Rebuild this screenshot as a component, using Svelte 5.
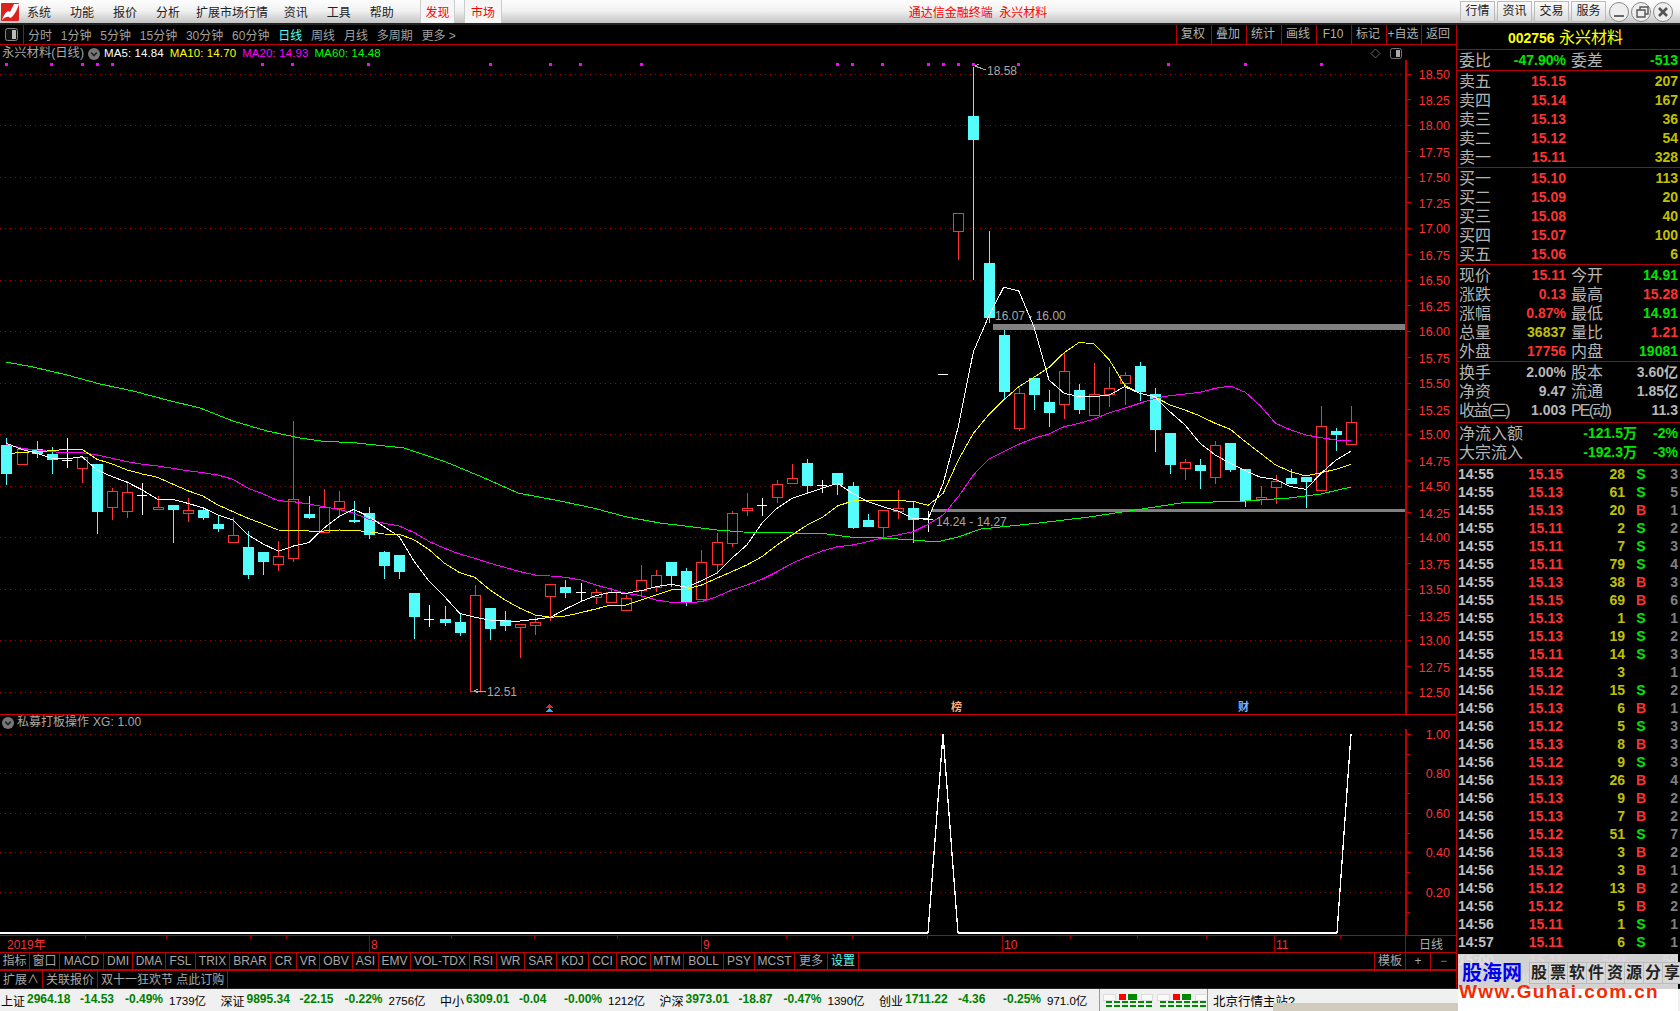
<script>
  const menu = ['系统', '功能', '报价', '分析', '扩展市场行情', '资讯', '工具', '帮助'];
  const periods = ['分时', '1分钟', '5分钟', '15分钟', '30分钟', '60分钟', '日线', '周线', '月线', '多周期', '更多 >'];
  const tools = ['复权', '叠加', '统计', '画线', 'F10', '标记', '+自选', '返回'];

  // [width, label]
  const tabs = [[30,'指标'],[30,'窗口'],[44,'MACD'],[29,'DMI'],[33,'DMA'],[30,'FSL'],[34,'TRIX'],[41,'BRAR'],[26,'CR'],[23,'VR'],[33,'OBV'],[26,'ASI'],[32,'EMV'],[59,'VOL-TDX'],[27,'RSI'],[28,'WR'],[32,'SAR'],[32,'KDJ'],[28,'CCI'],[34,'ROC'],[33,'MTM'],[40,'BOLL'],[31,'PSY'],[40,'MCST'],[33,'更多'],[31,'设置']];
  const extTabs = ['扩展∧', '关联报价', '双十一狂欢节 点此订购'];

  const indexes = [
    ['上证', '2964.18', '-14.53', '-0.49%', '1739亿'],
    ['深证', '9895.34', '-22.15', '-0.22%', '2756亿'],
    ['中小', '6309.01', '-0.04', '-0.00%', '1212亿'],
    ['沪深', '3973.01', '-18.87', '-0.47%', '1390亿'],
    ['创业', '1711.22', '-4.36', '-0.25%', '971.0亿']
  ];

  const asks = [['卖五','15.15','207'],['卖四','15.14','167'],['卖三','15.13','36'],['卖二','15.12','54'],['卖一','15.11','328']];
  const bids = [['买一','15.10','113'],['买二','15.09','20'],['买三','15.08','40'],['买四','15.07','100'],['买五','15.06','6']];
  const quote = [
    ['现价','15.11','r','今开','14.91','g'],
    ['涨跌','0.13','r','最高','15.28','r'],
    ['涨幅','0.87%','r','最低','14.91','g'],
    ['总量','36837','y','量比','1.21','r'],
    ['外盘','17756','r','内盘','19081','g']
  ];
  const basics = [
    ['换手','2.00%','w','股本','3.60亿','w'],
    ['净资','9.47','w','流通','1.85亿','w'],
    ['收益(三)','1.003','w','PE(动)','11.3','w']
  ];
  const ticks = `14:55 15.15 28 S 3|14:55 15.13 61 S 5|14:55 15.13 20 B 1|14:55 15.11 2 S 2|14:55 15.11 7 S 3|14:55 15.11 79 S 4|14:55 15.13 38 B 3|14:55 15.15 69 B 6|14:55 15.13 1 S 1|14:55 15.13 19 S 2|14:55 15.11 14 S 3|14:55 15.12 3 - 1|14:56 15.12 15 S 2|14:56 15.13 6 B 1|14:56 15.12 5 S 3|14:56 15.13 8 B 3|14:56 15.12 9 S 3|14:56 15.13 26 B 4|14:56 15.13 9 B 2|14:56 15.13 7 B 2|14:56 15.12 51 S 7|14:56 15.13 3 B 2|14:56 15.12 3 B 1|14:56 15.12 13 B 2|14:56 15.12 5 B 2|14:56 15.11 1 S 1|14:57 15.11 6 S 1|15:00 15.11 599 - 50`
    .split('|').map((r) => r.split(' '));

  // candles were read off the screenshot in three crops, so each list has its own y origin
  // type, wick top, wick bottom, body top, body bottom
  const part1 = [['d',55,195,75,162],['u',85,131,88,131],['d',62,115,88,101],['d',82,162,102,120],['x',55,143,120,120],['u',108,190,112,143],['d',132,342,132,276],['u',205,300,214,260],['u',182,294,217,272],['x',190,285,226,226],['u',228,268,262,267],['d',255,368,255,270],['u',235,305,270,278],['d',268,300,270,294],['d',285,336,312,327],['u',292,365,346,365],['d',333,476,381,465],['d',396,465,396,426],['u',363,453,409,431],['u',3,426,238,413],['d',228,296,282,294],['u',207,335,262,335],['u',213,292,244,263],['d',243,309,300,305],['d',261,357,279,345],['d',393,477,396,438],['d',405,477,405,456],['d',519,657,519,591],['x',555,621,598,598],['d',558,618,597,609],['d',580,648,606,639],['u',495,814,526,812],['d',564,660,564,627],['d',573,633,600,618],['u',612,714,612,621],['u',590,645,606,615],['u',492,603,493,527]];
  const part2 = [['d',450,503,471,489],['x',460,517,487,487],['u',477,522,487,500],['u',474,515,487,515],['u',495,540,505,540],['u',405,500,451,480],['u',420,485,436,471],['d',396,472,396,438],['d',414,527,423,520],['u',360,510,397,506],['u',310,432,337,403],['u',243,351,250,338],['u',189,258,234,240],['x',204,258,225,225],['u',150,219,163,202],['u',102,163,145,160],['d',87,190,99,168],['x',150,189,165,165],['d',129,195,129,165],['d',156,297,168,293],['d',252,291,270,291],['u',241,322,241,292],['u',180,267,235,242],['d',216,339,234,270],['x',243,307,267,267]];
  const part3 = [['x',972,972,972,972],['u',490,630,490,542],['d',50,690,198,270],['d',543,818,639,804],['d',840,1050,855,1026],['u',1015,1143,1030,1133],['d',984,1080,984,1035],['d',1020,1131,1056,1089],['u',910,1107,964,1061],['d',1002,1092,1020,1080],['u',939,1095,1033,1094],['u',951,1071,1015,1033],['u',966,1065,976,998],['d',936,1053,948,1026],['d',1014,1206,1032,1140],['d',1149,1272,1149,1245],['u',1227,1290,1237,1255],['d',1227,1317,1245,1263],['u',1173,1302,1186,1280],['d',1179,1266,1179,1260],['d',1257,1371,1257,1354],['u',1308,1365,1342,1348],['u',1275,1362,1294,1312],['d',1257,1302,1284,1302],['d',1281,1374,1281,1296],['u',1068,1320,1127,1319],['d',1134,1203,1143,1155],['u',1068,1182,1117,1181]];

  const scale = (rows, y0) => rows.map(([t, ...v]) => [t, ...v.map((n) => Math.round(y0 + n / 3))]);
  const candles = [...scale(part1, 420), ...scale(part2, 430), ...scale(part3, 50)].map((c, i) => ({
    type: c[0], x: Math.round(6.4 + i * 15.11), wt: c[1], wb: c[2], bt: c[3], bb: c[4]
  }));

  const maLine = (a, b, c) =>
    [...a.map((n) => 420 + n / 3), ...b.map((n) => 430 + n / 3), ...c.map((n) => 50 + n / 3)]
      .map((y, i) => `${(6.4 + i * 15.11).toFixed(1)},${y.toFixed(1)}`).join(' ');

  const ma5 = maLine(
    [70,88,100,115,117,110,150,170,187,210,238,238,250,263,285,300,345,372,394,378,368,325,290,268,290,320,350,425,485,530,580,592,600,603,603,598,592],
    [537,515,497,487,490,482,470,463,472,452,430,385,345,280,235,205,190,175,160,190,215,230,243,265,267],
    [1300,1130,905,800,712,723,830,990,1030,1040,1040,1035,1010,1030,1040,1085,1125,1180,1215,1240,1262,1282,1288,1310,1318,1270,1230,1203]);
  const ma10 = maLine(
    [102,97,95,92,88,88,118,132,150,162,172,192,212,228,255,275,295,312,330,331,333,333,330,331,335,342,343,360,390,430,458,472,510,540,565,585,592],
    [558,548,537,525,525,510,495,480,478,465,445,425,405,380,345,315,285,262,228,213,211,211,212,214,226],
    [1330,1230,1150,1095,1050,1010,982,952,908,877,882,930,1005,1030,1040,1065,1080,1098,1120,1138,1175,1210,1245,1265,1278,1268,1258,1243]);
  const ma20 = maLine(
    [72,85,90,95,98,98,105,115,125,133,138,145,152,158,165,178,205,222,242,245,252,260,268,280,298,310,318,338,365,385,402,415,430,442,455,465,468],
    [442,450,465,477,490,497,510,517,518,515,500,480,465,448,425,400,380,363,350,345,335,323,315,305,283],
    [1395,1340,1275,1228,1205,1183,1165,1152,1130,1120,1107,1088,1075,1060,1045,1037,1032,1027,1015,1008,1027,1068,1120,1140,1155,1163,1170,1170]);
  const ma60 = '6,362 33,367 67,375 100,384 133,391 167,400 200,408 233,421 267,431 300,438 321,441 357,443 404,448 446,462 482,477 518,493 560,501 593,508 627,517 660,523 693,527 717,530 743,532 793,533 827,534 850,537 882,538 913,540 937,542 958,537 981,529 1039,523 1089,517 1142,509 1181,503 1245,501 1289,498 1321,494 1351,487';

  const priceTicks = Array.from({ length: 25 }, (_, k) => ({
    y: Math.round(73.5 + k * 25.77),
    odd: k % 2 === 1,
    label: (18.5 - k * 0.25).toFixed(2)
  }));
  const dots = [6,51,82,97,112,262,292,368,490,550,580,641,837,852,882,928,943,958,973,1018,1168,1245,1321];
  const subTicks = [[735,'1.00'],[774,'0.80'],[814,'0.60'],[853,'0.40'],[893,'0.20']];
  const dates = [[6,'2019年',false],[370,'8',true],[702,'9',true],[1003,'10',true],[1275,'11',true]];
  const minorDates = [85,166,250,286,451,534,617,786,852,927,1070,1137,1206,1340];

  const clr = { r: 'red', g: 'green', y: 'dim', w: 'silver' };
</script>

{#snippet chevron()}
  <svg class="chev" width="12" height="12" viewBox="0 0 12 12"><circle cx="6" cy="6" r="6" fill="#777"/><path d="M3.2 4.6 6 7.6 8.8 4.6" fill="none" stroke="#222" stroke-width="1.6"/></svg>
{/snippet}

<div class="app">
  <header class="titlebar">
    <svg class="logo-mark" width="18" height="18" viewBox="0 0 18 18">
      <rect width="18" height="18" rx="1" fill="#d9231f"/>
      <path d="M1 17 C4 9 7 7 9 9 L13 1 L18 1 C16 8 12 14 9 15 C8 13 5 13 1 17Z" fill="#fff"/>
    </svg>
    <nav class="menu">
      {#each menu as item}<span class:long={item.length > 2}>{item}</span>{/each}
    </nav>
    <div class="found"><span>发现</span></div>
    <div class="found second"><span>市场</span></div>
    <div class="app-title">通达信金融终端&nbsp;&nbsp;永兴材料</div>
    <div class="top-btns">
      <span>行情</span><span>资讯</span><span>交易</span><span>服务</span>
    </div>
    <div class="win-btns">
      <svg width="64" height="20" viewBox="0 0 64 20">
        <g fill="#eee" stroke="#888">
          <circle cx="10" cy="10" r="9.5"/><circle cx="32" cy="10" r="9.5"/><circle cx="54" cy="10" r="9.5"/>
        </g>
        <path d="M5 13h10v2H5z" fill="#666"/>
        <path d="M28 8h8v7h-8zM31 8V5h8v7h-3" fill="none" stroke="#555" stroke-width="1.4"/>
        <path d="M50 6l8 8M58 6l-8 8" stroke="#555" stroke-width="2.6"/>
      </svg>
    </div>
  </header>

  <div class="body">
    <section class="left">
      <div class="toolbar">
        <div class="panel-toggle">
          <svg width="13" height="13" viewBox="0 0 13 13"><rect x=".5" y=".5" width="12" height="12" rx="2" fill="#111" stroke="#888"/><rect x="7" y="2" width="4" height="9" fill="#bbb"/></svg>
        </div>
        <div class="periods">
          {#each periods as p}<span class:on={p === '日线'}>{p}</span>{/each}
        </div>
        <div class="tools">
          {#each tools as t}<span>{t}</span>{/each}
        </div>
      </div>

      <div class="legend">
        <span class="gray">永兴材料(日线)</span>
        {@render chevron()}
        <span class="ma white">MA5: 14.84</span>
        <span class="ma yellow">MA10: 14.70</span>
        <span class="ma magenta">MA20: 14.93</span>
        <span class="ma lime">MA60: 14.48</span>
        <span class="legend-icons">
          <svg width="32" height="12" viewBox="0 0 32 12">
            <path d="M5.5 1 10 5.5 5.5 10 1 5.5Z" fill="none" stroke="#666"/>
            <rect x="20.5" y=".5" width="11" height="10" rx="2" fill="none" stroke="#777"/>
            <rect x="26" y="2" width="4" height="7" fill="#aaa"/>
          </svg>
        </span>
      </div>

      <svg class="chart" width="1456" height="654" viewBox="0 60 1456 654" shape-rendering="crispEdges">
        {#each priceTicks as t}
          {#if !t.odd}
            <line x1="0" x2="1405" y1={t.y + 0.5} y2={t.y + 0.5} stroke="#a00000" stroke-dasharray="1 4"/>
          {/if}
          <line x1="1407" x2="1411" y1={t.y + 0.5} y2={t.y + 0.5} stroke="#d00000"/>
          <text class="axis" x="1450" y={t.y + (t.odd ? 6 : 4.5)}>{t.label}</text>
        {/each}
        <rect x="1405" y="60" width="2" height="654" fill="#c00000"/>

        {#each dots as x}<rect x={x - 1} y="63" width="3" height="3" fill="#f0f"/>{/each}

        <rect x="993" y="324" width="412" height="6" fill="#808080"/>
        <rect x="931" y="509" width="474" height="3" fill="#808080"/>

        {#each candles as c}
          {#if c.type === 'x'}
            <line x1={c.x + 0.5} x2={c.x + 0.5} y1={c.wt} y2={c.wb} stroke="#fff"/>
            <line x1={c.x - 5} x2={c.x + 5} y1={c.bt + 0.5} y2={c.bt + 0.5} stroke="#fff"/>
          {:else if c.type === 'd'}
            <line x1={c.x + 0.5} x2={c.x + 0.5} y1={c.wt} y2={c.wb} stroke="#54fcfc"/>
            <rect x={c.x - 5} y={c.bt} width="11" height={c.bb - c.bt} fill="#54fcfc"/>
          {:else}
            <line x1={c.x + 0.5} x2={c.x + 0.5} y1={c.wt} y2={c.bt} stroke="#ff3232"/>
            <line x1={c.x + 0.5} x2={c.x + 0.5} y1={c.bb} y2={c.wb} stroke="#ff3232"/>
            <rect x={c.x - 4.5} y={c.bt + 0.5} width="10" height={c.bb - c.bt} fill="#000" stroke="#ff3232"/>
          {/if}
        {/each}

        <polyline points={ma60} fill="none" stroke="#0f0"/>
        <polyline points={ma20} fill="none" stroke="#f0f"/>
        <polyline points={ma10} fill="none" stroke="#ff0"/>
        <polyline points={ma5} fill="none" stroke="#fff"/>

        <path d="M975 66 L986 70 M975 66l4-2M975 66l4 2" stroke="#aaa" fill="none"/>
        <text class="note" x="987" y="75">18.58</text>
        <text class="note" x="995" y="320">16.07 - 16.00</text>
        <text class="note" x="936" y="526">14.24 - 14.27</text>
        <path d="M474 691 H486 M474 691l4-2M474 691l4 2" stroke="#aaa" fill="none"/>
        <text class="note" x="487" y="696">12.51</text>

        <path d="M549.5 704 553 708 546 708Z" fill="#e22"/>
        <path d="M549.5 708 553 712 546 712Z" fill="#2af"/>
        <text class="mark bang" x="951" y="711">榜</text>
        <text class="mark cai" x="1238" y="711">财</text>
      </svg>

      <div class="legend sub">
        {@render chevron()}
        <span class="gray">私募打板操作</span>
        <span class="ma gray">XG: 1.00</span>
      </div>

      <svg class="chart sub-chart" width="1456" height="206" viewBox="0 730 1456 206" shape-rendering="crispEdges">
        {#each subTicks as [y, label]}
          <line x1="0" x2="1405" y1={y + 0.5} y2={y + 0.5} stroke="#a00000" stroke-dasharray="1 4"/>
          <line x1="1407" x2="1411" y1={y + 0.5} y2={y + 0.5} stroke="#d00000"/>
          <line x1="1407" x2="1410" y1={y + 20.5} y2={y + 20.5} stroke="#d00000"/>
          <text class="axis" x="1450" y={y + 5}>{label}</text>
        {/each}
        <rect x="1405" y="730" width="2" height="206" fill="#c00000"/>
        <rect x="0" y="933" width="928" height="2" fill="#fff"/>
        <rect x="958" y="933" width="379" height="2" fill="#fff"/>
        <polyline points="928,934 943,735 958,934" fill="none" stroke="#fff" stroke-width="1.3"/>
        <polyline points="1337,934 1351,735" fill="none" stroke="#fff" stroke-width="1.3"/>
      </svg>

      <div class="date-row">
        <div class="dates">
          {#each minorDates as x}<i class="minor" style:left="{x}px"></i>{/each}
          {#each dates as [x, label, tick]}
            <span class="date" class:tick style:left="{x}px">{label}</span>
          {/each}
        </div>
        <div class="date-type">日线</div>
      </div>

      <div class="tab-row">
        {#each tabs as [w, label]}
          <span class="tab" class:active={label === '设置'} style:width="{w}px">{label}</span>
        {/each}
        <span class="tab-fill"></span>
        <span class="tab wide">模板</span>
        <span class="tab small">+</span>
        <span class="tab small last">−</span>
      </div>

      <div class="ext-row">
        {#each extTabs as t}<span>{t}</span>{/each}
      </div>
    </section>

    <aside class="panel">
      <div class="stock"><b>002756</b> 永兴材料</div>
      <div class="pair head">
        <span class="lab">委比</span><span class="val green">-47.90%</span><i></i>
        <span class="lab">委差</span><span class="val green">-513</span>
      </div>
      <div class="block">
        {#each asks as [l, p, q]}
          <div class="book"><span class="lab">{l}</span><span class="val red">{p}</span><span class="val dim">{q}</span></div>
        {/each}
      </div>
      <div class="block">
        {#each bids as [l, p, q]}
          <div class="book"><span class="lab">{l}</span><span class="val red">{p}</span><span class="val dim">{q}</span></div>
        {/each}
      </div>
      <div class="block">
        {#each quote as [a, b, c, d, e, f]}
          <div class="pair"><span class="lab">{a}</span><span class="val {clr[c]}">{b}</span><i></i><span class="lab">{d}</span><span class="val {clr[f]}">{e}</span></div>
        {/each}
      </div>
      <div class="block short">
        {#each basics as [a, b, c, d, e, f]}
          <div class="pair"><span class="lab" class:tight={a.includes('(')}>{a}</span><span class="val {clr[c]}">{b}</span><i></i><span class="lab" class:tight={d.includes('(')}>{d}</span><span class="val {clr[f]}">{e}</span></div>
        {/each}
      </div>
      <div class="block flow">
        <div class="flow-row"><span class="lab">净流入额</span><span class="val green">-121.5万</span><span class="val green">-2%</span></div>
        <div class="flow-row"><span class="lab">大宗流入</span><span class="val green">-192.3万</span><span class="val green">-3%</span></div>
      </div>
      <div class="ticks">
        {#each ticks as [t, p, q, s, n]}
          <div class="tick-row">
            <span class="time">{t}</span>
            <span class="val red">{p}</span>
            <span class="val {q === '599' ? 'purple' : 'dim'}">{q}</span>
            <span class="bs" class:buy={s === 'B'}>{s === '-' ? '' : s}</span>
            <span class="val last">{n}</span>
          </div>
        {/each}
      </div>
      <div class="panel-tabs">
        {#each ['笔', '价', '细', '势', '联', '值', '主', '筹'] as t}<span>{t}</span>{/each}
      </div>
    </aside>
  </div>

  <footer class="status">
    <div class="indexes">
      {#each indexes as [name, num, chg, pct, amt]}
        <div class="idx">
          <span>{name}</span><b>{num}</b><b>{chg}</b><b>{pct}</b><span class="amt">{amt}</span>
        </div>
      {/each}
    </div>
    <div class="meter">
      <svg width="106" height="17" viewBox="0 0 106 17" shape-rendering="crispEdges">
        {#each [0, 54] as ox}
          <rect x={ox + 3} y="2" width="12" height="6" fill="#fafafa" stroke="#ddd"/>
          <rect x={ox + 19} y="2" width="7" height="6" fill="#f00"/>
          <rect x={ox + 28} y="2" width="9" height="6" fill="#080"/>
          <rect x={ox + 41} y="2" width="11" height="6" fill="#fafafa" stroke="#ddd"/>
          {#each [0, 1, 2, 3, 4, 5] as k}
            <rect x={ox + 6 + k * 8} y="9" width="6" height="2" fill="#080"/>
            <rect x={ox + 6 + k * 8} y="13" width="6" height="2" fill="#080"/>
          {/each}
        {/each}
      </svg>
    </div>
    <div class="server">北京行情主站?</div>
    <div class="popup"></div>
  </footer>

  <div class="watermark">
    <div class="wm-top">
      <span class="wm-brand">股海网</span>
      <span class="wm-slogan">
        {#each '股票软件资源分享' as ch}<span>{ch}</span>{/each}
      </span>
    </div>
    <div class="wm-url">Www.Guhai.com.cn</div>
  </div>
</div>

<style>
  :global(body) {
    background: #000;
    font-family: "Liberation Sans", "Noto Sans CJK SC", sans-serif;
  }

  .app {
    position: relative;
    width: 1680px;
    height: 1011px;
    display: flex;
    flex-direction: column;
    background: #000;
    overflow: hidden;
    color: #b0b0b0;
    font-size: 12px;
  }

  /* title bar */
  .titlebar {
    height: 23px;
    border-bottom: 2px solid #222;
    background: linear-gradient(#fdfdfd, #f2f2f2 45%, #c4c4c4);
    display: flex;
    align-items: center;
    color: #222;
    flex: none;
  }

  .logo-mark {
    margin-left: 1px;
    flex: none;
  }

  .menu {
    display: flex;
    gap: 19px;
    margin-left: 8px;
    width: 393px;
  }

  .menu .long {
    margin: 0 -3.2px;
  }

  .found {
    height: 23px;
    width: 33px;
    border-left: 1px solid #ccc;
    border-right: 1px solid #ccc;
    background: #f6f6f6;
    display: flex;
    align-items: center;
    justify-content: center;
    color: #f00;
  }

  .second {
    margin-left: 9px;
    width: 36px;
  }

  .app-title {
    flex: 1;
    text-align: center;
    color: #f00;
    padding-right: 6px;
  }

  .top-btns {
    display: flex;
    gap: 2px;
  }

  .top-btns span {
    width: 33px;
    height: 19px;
    line-height: 19px;
    text-align: center;
    border: 1px solid #bbb;
    background: linear-gradient(#fafafa, #ddd);
  }

  .win-btns {
    margin: 0 7px 0 3px;
    height: 20px;
  }

  .body {
    display: flex;
    height: 963px;
    flex: none;
  }

  .left {
    width: 1456px;
    border-right: 1px solid #b30000;
    display: flex;
    flex-direction: column;
    flex: none;
  }

  /* period toolbar */
  .toolbar {
    height: 19px;
    border-bottom: 1px solid #c00000;
    display: flex;
    align-items: stretch;
    flex: none;
  }

  .panel-toggle {
    width: 23px;
    border-right: 1px solid #c00000;
    display: flex;
    align-items: center;
    justify-content: center;
  }

  .periods {
    display: flex;
    align-items: center;
    gap: 8.8px;
    margin-left: 4px;
    color: #a0a0a0;
  }

  .periods .on {
    color: #54fcfc;
  }

  .tools {
    margin-left: auto;
    display: flex;
    color: #b0b0b0;
  }

  .tools span {
    width: 32px;
    padding-right: 2px;
    border-left: 1px solid #b30000;
    text-align: center;
    line-height: 19px;
    white-space: nowrap;
  }

  /* chart legends */
  .legend {
    height: 15px;
    box-sizing: border-box;
    padding: 2px 0 0 2px;
    display: flex;
    align-items: center;
    font-size: 12.3px;
    line-height: 13px;
    flex: none;
  }

  .sub {
    height: 15px;
    padding-top: 1px;
    border-top: 1px solid #d00000;
  }

  .chev {
    margin: 0 4px;
    flex: none;
  }

  .sub .chev {
    margin: 0 3px 0 0;
  }

  .ma {
    margin-right: 6px;
    font-size: 11.5px;
    letter-spacing: .1px;
  }

  .sub .gray {
    font-size: 12px;
  }

  .sub .ma {
    margin-left: 4px;
    font-size: 12px;
  }

  .legend-icons {
    margin-left: auto;
    margin-right: 54px;
    display: flex;
  }

  .gray { color: #a8a8a8; }
  .white { color: #fff; }
  .yellow { color: #ff0; }
  .magenta { color: #f0f; }
  .lime { color: #0f0; }

  .chart {
    display: block;
    flex: none;
  }

  .sub-chart {
    overflow: visible;
  }

  .axis {
    fill: #ff3232;
    font-size: 12.5px;
    text-anchor: end;
  }

  .note {
    fill: #a8a8a8;
    font-size: 12px;
  }

  .mark {
    font-size: 11px;
    font-weight: bold;
  }

  .bang { fill: #ffb070; }
  .cai { fill: #7fb4ff; }

  /* date axis */
  .date-row {
    height: 16px;
    border-top: 1px solid #c00000;
    border-bottom: 1px solid #c00000;
    display: flex;
    flex: none;
  }

  .dates {
    position: relative;
    width: 1405px;
    border-right: 1px solid #c00000;
    color: #f03232;
  }

  .date {
    position: absolute;
    top: 0;
    line-height: 18px;
    padding-left: 1px;
  }

  .date.tick {
    border-left: 1px solid #a00000;
    height: 16px;
    margin-left: -1px;
  }

  .minor {
    position: absolute;
    top: 0;
    height: 3px;
    width: 1px;
    background: #a00000;
  }

  .date-type {
    flex: 1;
    text-align: center;
    line-height: 18px;
  }

  /* indicator tabs */
  .tab-row {
    height: 16px;
    border-bottom: 2px solid #c00000;
    display: flex;
    flex: none;
    line-height: 17px;
  }

  .tab {
    flex: none;
    text-align: center;
    border-right: 1px solid #b30000;
    box-sizing: border-box;
    white-space: nowrap;
    color: #a8a8a8;
  }

  .tab.active {
    color: #54fcfc;
  }

  .tab-fill {
    flex: 1;
    border-right: 1px solid #b30000;
  }

  .tab.wide { width: 31px; }
  .tab.small { width: 25px; }
  .tab.last { border-right: 0; }

  .ext-row {
    display: flex;
    height: 17px;
    line-height: 18px;
    flex: none;
    color: #a8a8a8;
  }

  .ext-row span {
    padding: 0 3px;
    border-right: 1px solid #b30000;
    white-space: nowrap;
  }

  /* right quote panel */
  .panel {
    width: 223px;
    display: flex;
    flex-direction: column;
    font-size: 15px;
    flex: none;
  }

  .stock {
    height: 25px;
    line-height: 26px;
    text-align: center;
    color: #ff0;
    font-size: 16px;
    border-bottom: 1px solid #b30000;
    flex: none;
    padding-right: 6px;
    box-sizing: border-box;
  }

  .stock b {
    font-size: 14px;
  }

  .pair,
  .book,
  .flow-row,
  .tick-row {
    display: grid;
    height: 19px;
    line-height: 19px;
    align-items: center;
  }

  .pair {
    grid-template-columns: 40px 67px 5px 40px 67px;
    padding-left: 2px;
  }

  .pair.head {
    height: 20px;
    border-bottom: 1px solid #b30000;
    flex: none;
  }

  .book {
    grid-template-columns: 40px 67px 112px;
    padding-left: 2px;
  }

  .block {
    padding-top: 1px;
    box-sizing: border-box;
    border-bottom: 1px solid #b30000;
    height: 97px;
    flex: none;
  }

  .block.short {
    height: 61px;
  }

  .block.flow {
    height: 42px;
  }

  .flow-row {
    grid-template-columns: 72px 106px 41px;
    padding-left: 2px;
  }

  .lab {
    color: #b4b4b4;
    font-size: 16px;
    white-space: nowrap;
  }

  .lab.tight {
    letter-spacing: -1.8px;
  }

  .val {
    text-align: right;
    font-size: 14px;
    font-weight: bold;
    white-space: nowrap;
  }

  .red { color: #ff3232; }
  .green { color: #00e600; }
  .dim { color: #c0c000; }
  .silver { color: #b8b8b8; }
  .purple { color: #c000c0; }
  .last { color: #808080; }

  .ticks {
    flex: 1;
    overflow: hidden;
    min-height: 0;
  }

  .tick-row {
    height: 18px;
    line-height: 18px;
    grid-template-columns: 36px 69px 62px 32px 21px;
    padding-left: 1px;
  }

  .time {
    color: #c0c0c0;
    font-size: 14px;
    font-weight: bold;
    white-space: nowrap;
  }

  .bs {
    text-align: center;
    font-size: 14px;
    font-weight: bold;
    color: #00e600;
  }

  .bs.buy {
    color: #ff3232;
  }

  .panel-tabs {
    height: 18px;
    display: flex;
    justify-content: space-between;
    padding: 0 10px;
    font-size: 13px;
    line-height: 18px;
    color: #a8a8a8;
    flex: none;
  }

  /* status bar */
  .status {
    position: relative;
    flex: 1;
    border-top: 1px solid #222;
    background: #f0f0f0;
    color: #000;
    display: flex;
    align-items: center;
  }

  .indexes {
    display: flex;
    padding-left: 1px;
    width: 1098px;
    box-sizing: border-box;
  }

  .idx {
    display: grid;
    grid-template-columns: 26px 53px 45px 44px 51.5px;
    width: 219.5px;
    white-space: nowrap;
    font-size: 12px;
  }

  .idx b {
    color: #008000;
    font-size: 12px;
  }

  .amt {
    font-size: 11.5px;
  }

  .meter {
    height: 22px;
    width: 107px;
    border-left: 1px solid #999;
    border-right: 1px solid #999;
    display: flex;
    align-items: center;
    margin-left: 1px;
    flex: none;
  }

  .server {
    margin-left: 5px;
    font-size: 12.5px;
    white-space: nowrap;
  }

  /* things lying over the bottom corner */
  .popup {
    position: absolute;
    left: 1273px;
    top: 14px;
    width: 190px;
    height: 10px;
    background: #d0cbbd;
  }

  .watermark {
    position: absolute;
    left: 1458px;
    top: 954px;
    width: 220px;
    height: 57px;
    display: flex;
    flex-direction: column;
  }

  .wm-top {
    height: 35px;
    background: rgba(226, 226, 226, .93);
    display: flex;
    align-items: center;
    padding-left: 4px;
  }

  .wm-brand {
    color: #0000f0;
    font-size: 20px;
    font-weight: bold;
    white-space: nowrap;
  }

  .wm-slogan {
    display: flex;
    margin-left: 8px;
    margin-top: 2px;
  }

  .wm-slogan span {
    width: 18px;
    height: 20px;
    line-height: 20px;
    text-align: center;
    font-size: 16px;
    font-weight: bold;
    color: #222;
    border: 1px solid #bbb;
    margin-left: -1px;
    background: #d8d8d8;
  }

  .wm-url {
    flex: 1;
    margin-top: -4px;
    background: linear-gradient(transparent 4px, #fff 4px);
    color: #f52a00;
    font-size: 19px;
    font-weight: bold;
    letter-spacing: 1.4px;
    padding-left: 1px;
    line-height: 14px;
    white-space: nowrap;
  }
</style>
